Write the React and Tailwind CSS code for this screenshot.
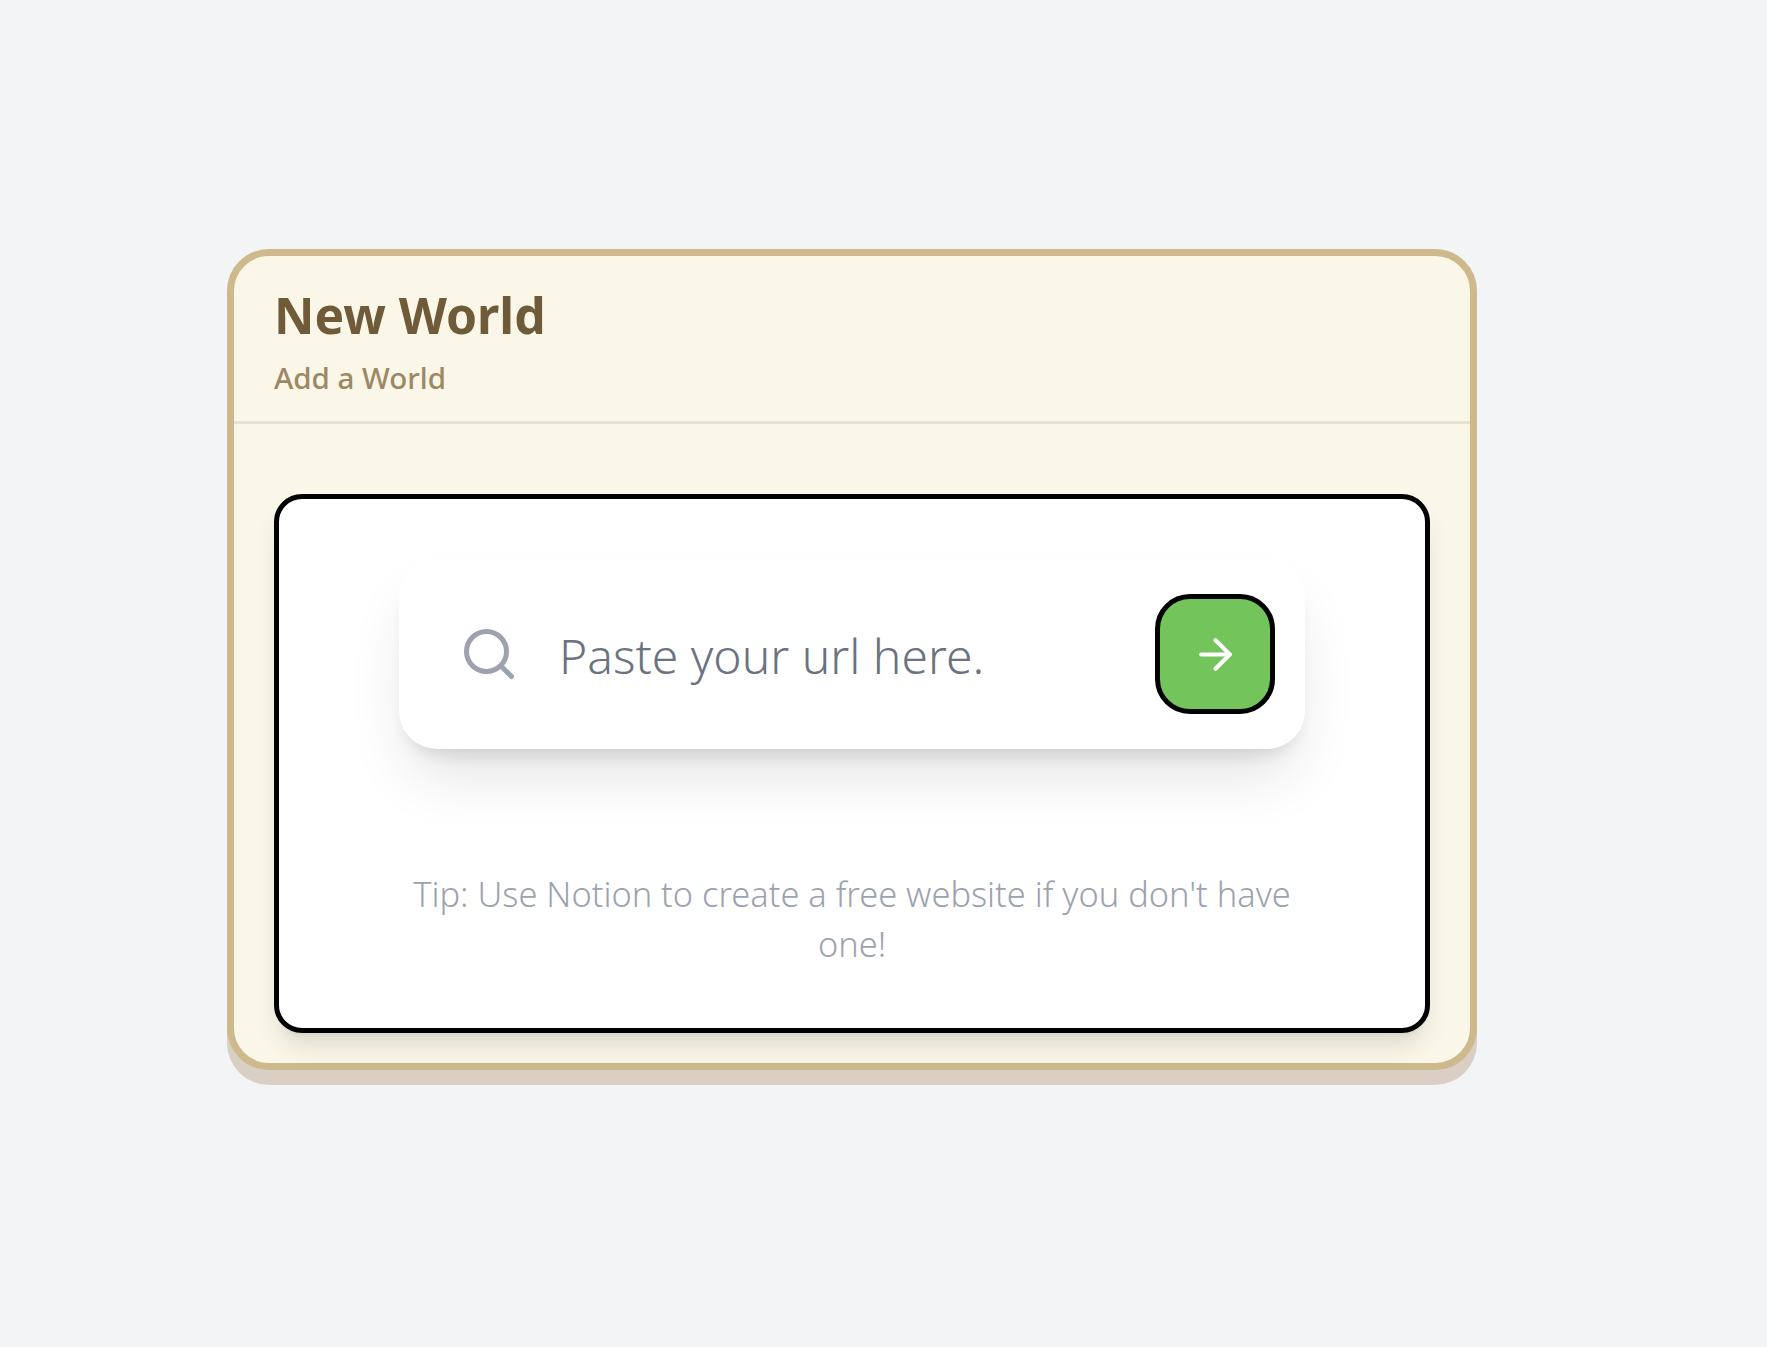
import { ArrowRight, Search } from 'lucide-react';

const App = () => {
  return (
    <div className="min-h-screen bg-[#f3f4f6] pt-[249px] pl-[227px] font-['Noto_Sans',sans-serif]">
      <div className="w-[1250px] rounded-[42px] border-[7px] border-[#cdb98c] bg-[#faf6e8] shadow-[0_15px_0_#d9cfc5]">
        <div className="h-[168px] border-b-[3px] border-[#e8e2d0] px-10 pt-[27px]">
          <h1 className="text-[49.8px] leading-[64px] font-bold text-[#6f5a39]">New World</h1>
          <p className="mt-[11px] text-[29.5px] leading-[40px] font-medium text-[#9d8863]">Add a World</p>
        </div>
        <div className="px-10 pt-[70px] pb-[30px]">
          <div className="rounded-[28px] border-[5px] border-black bg-white pt-[60px] pb-[59px] shadow-[0_18px_26px_-5px_rgba(0,0,0,0.1),0_7px_10px_-7px_rgba(0,0,0,0.1)]">
            <div className="mx-auto flex h-[190px] w-[906px] items-center rounded-[38px] bg-white pr-[30px] pl-[60px] shadow-[0_35px_64px_-14px_rgba(0,0,0,0.13),0_14px_17px_-10px_rgba(0,0,0,0.12)]">
              <Search size={60} className="shrink-0 text-[#9ca3af]" />
              <input
                type="text"
                placeholder="Paste your url here."
                className="mt-[4px] ml-[40px] min-w-0 flex-1 bg-transparent text-[48px] font-light text-[#6b7280] outline-none placeholder:text-[#6b7280]"
              />
              <button className="flex h-[120px] w-[120px] shrink-0 items-center justify-center rounded-[35px] border-[5px] border-black bg-[#74c45c] text-white">
                <ArrowRight size={49} />
              </button>
            </div>
            <p className="mx-auto mt-[120px] w-[906px] text-center text-[34.4px] leading-[50px] font-light text-[#9ca3af]">
              Tip: Use Notion to create a free website if you don't have one!
            </p>
          </div>
        </div>
      </div>
    </div>
  );
};

export default App;
